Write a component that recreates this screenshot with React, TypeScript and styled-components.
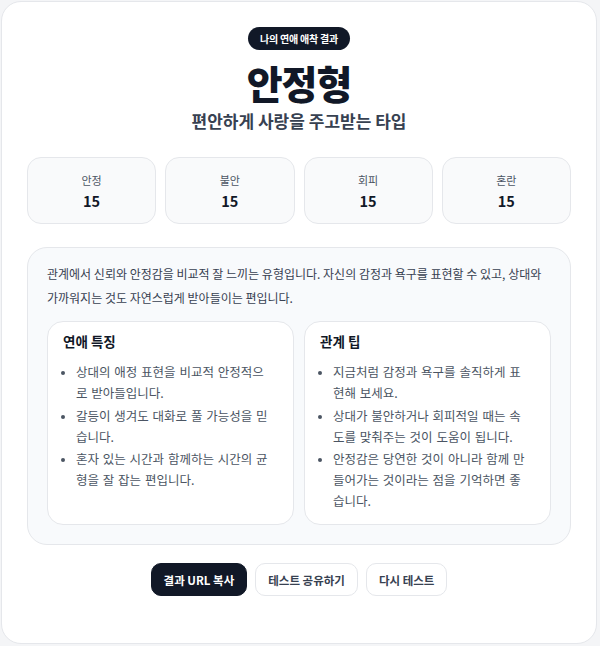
import React from "react";
import styled, { createGlobalStyle } from "styled-components";

const GlobalStyle = createGlobalStyle`
  * { box-sizing: border-box; }
  html, body {
    margin: 0;
    padding: 0;
    background: #f4f5f7;
  }
  body {
    font-family: "Noto Sans CJK KR", "Noto Sans", sans-serif;
    color: #111827;
  }
`;

const Page = styled.div`
  padding: 1px 3px 2px 1px;
`;

const Card = styled.main`
  min-height: 643px;
  background: #ffffff;
  border: 1px solid #e5e7eb;
  border-radius: 20px;
  padding: 25px 25px 40px;
  display: flex;
  flex-direction: column;
  align-items: center;
`;

const Badge = styled.span`
  display: inline-flex;
  align-items: center;
  height: 23px;
  padding: 0 12px;
  border-radius: 999px;
  background: #111827;
  color: #ffffff;
  font-size: 10px;
  font-weight: 700;
  letter-spacing: -0.2px;
`;

const Title = styled.h1`
  margin: 8px 0 0;
  font-size: 39px;
  line-height: 48px;
  font-weight: 800;
  letter-spacing: -1px;
  color: #111827;
`;

const Subtitle = styled.p`
  margin: 3px 0 0;
  font-size: 17px;
  line-height: 24px;
  font-weight: 600;
  color: #374151;
`;

const StatGrid = styled.div`
  width: 100%;
  margin-top: 24px;
  display: grid;
  grid-template-columns: repeat(4, 1fr);
  gap: 9px;
`;

const Stat = styled.div`
  height: 67px;
  background: #f9fafb;
  border: 1px solid #e5e7eb;
  border-radius: 14px;
  display: flex;
  flex-direction: column;
  align-items: center;
  justify-content: center;
  gap: 4px;
`;

const StatLabel = styled.span`
  font-size: 11px;
  line-height: 16px;
  color: #4b5563;
`;

const StatValue = styled.span`
  font-size: 14.5px;
  line-height: 18px;
  font-weight: 700;
  color: #111827;
`;

const Panel = styled.section`
  width: 100%;
  margin-top: 23px;
  background: #f8fafc;
  border: 1px solid #e5e7eb;
  border-radius: 20px;
  padding: 14px 19px 19px;
`;

const Summary = styled.p`
  margin: 0;
  font-size: 12px;
  line-height: 24px;
  color: #374151;
`;

const Columns = styled.div`
  margin-top: 11px;
  display: grid;
  grid-template-columns: 1fr 1fr;
  gap: 10px;
`;

const InfoCard = styled.div`
  background: #ffffff;
  border: 1px solid #e5e7eb;
  border-radius: 16px;
  padding: 9px 20px 13px 15px;
`;

const InfoTitle = styled.h2`
  margin: 0;
  font-size: 13.5px;
  line-height: 20px;
  font-weight: 700;
  color: #111827;
`;

const List = styled.ul`
  margin: 10px 0 0;
  padding-left: 13px;
`;

const Item = styled.li`
  font-size: 12.5px;
  line-height: 21px;
  word-spacing: 1px;
  color: #4b5563;
  & + & { margin-top: 1.5px; }
  &::marker { font-size: 10px; }
`;

const Actions = styled.div`
  margin-top: 18px;
  display: flex;
  gap: 8px;
`;

const Button = styled.button<{ $primary?: boolean }>`
  height: 33px;
  padding: 0 12px;
  border-radius: 10px;
  font-family: inherit;
  font-size: 11.5px;
  font-weight: 700;
  cursor: pointer;
  border: 1px solid ${(p) => (p.$primary ? "#111827" : "#e5e7eb")};
  background: ${(p) => (p.$primary ? "#111827" : "#ffffff")};
  color: ${(p) => (p.$primary ? "#ffffff" : "#374151")};
`;

const stats = [
  { label: "안정", value: 15 },
  { label: "불안", value: 15 },
  { label: "회피", value: 15 },
  { label: "혼란", value: 15 },
];

const traits = [
  "상대의 애정 표현을 비교적 안정적으로 받아들입니다.",
  "갈등이 생겨도 대화로 풀 가능성을 믿습니다.",
  "혼자 있는 시간과 함께하는 시간의 균형을 잘 잡는 편입니다.",
];

const tips = [
  "지금처럼 감정과 욕구를 솔직하게 표현해 보세요.",
  "상대가 불안하거나 회피적일 때는 속도를 맞춰주는 것이 도움이 됩니다.",
  "안정감은 당연한 것이 아니라 함께 만들어가는 것이라는 점을 기억하면 좋습니다.",
];

export default function App() {
  return (
    <>
      <GlobalStyle />
      <Page>
        <Card>
          <Badge>나의 연애 애착 결과</Badge>
          <Title>안정형</Title>
          <Subtitle>편안하게 사랑을 주고받는 타입</Subtitle>

          <StatGrid>
            {stats.map((s) => (
              <Stat key={s.label}>
                <StatLabel>{s.label}</StatLabel>
                <StatValue>{s.value}</StatValue>
              </Stat>
            ))}
          </StatGrid>

          <Panel>
            <Summary>
              관계에서 신뢰와 안정감을 비교적 잘 느끼는 유형입니다. 자신의 감정과 욕구를 표현할 수 있고, 상대와
              가까워지는 것도 자연스럽게 받아들이는 편입니다.
            </Summary>
            <Columns>
              <InfoCard>
                <InfoTitle>연애 특징</InfoTitle>
                <List>
                  {traits.map((t) => (
                    <Item key={t}>{t}</Item>
                  ))}
                </List>
              </InfoCard>
              <InfoCard>
                <InfoTitle>관계 팁</InfoTitle>
                <List>
                  {tips.map((t) => (
                    <Item key={t}>{t}</Item>
                  ))}
                </List>
              </InfoCard>
            </Columns>
          </Panel>

          <Actions>
            <Button $primary>결과 URL 복사</Button>
            <Button>테스트 공유하기</Button>
            <Button>다시 테스트</Button>
          </Actions>
        </Card>
      </Page>
    </>
  );
}
